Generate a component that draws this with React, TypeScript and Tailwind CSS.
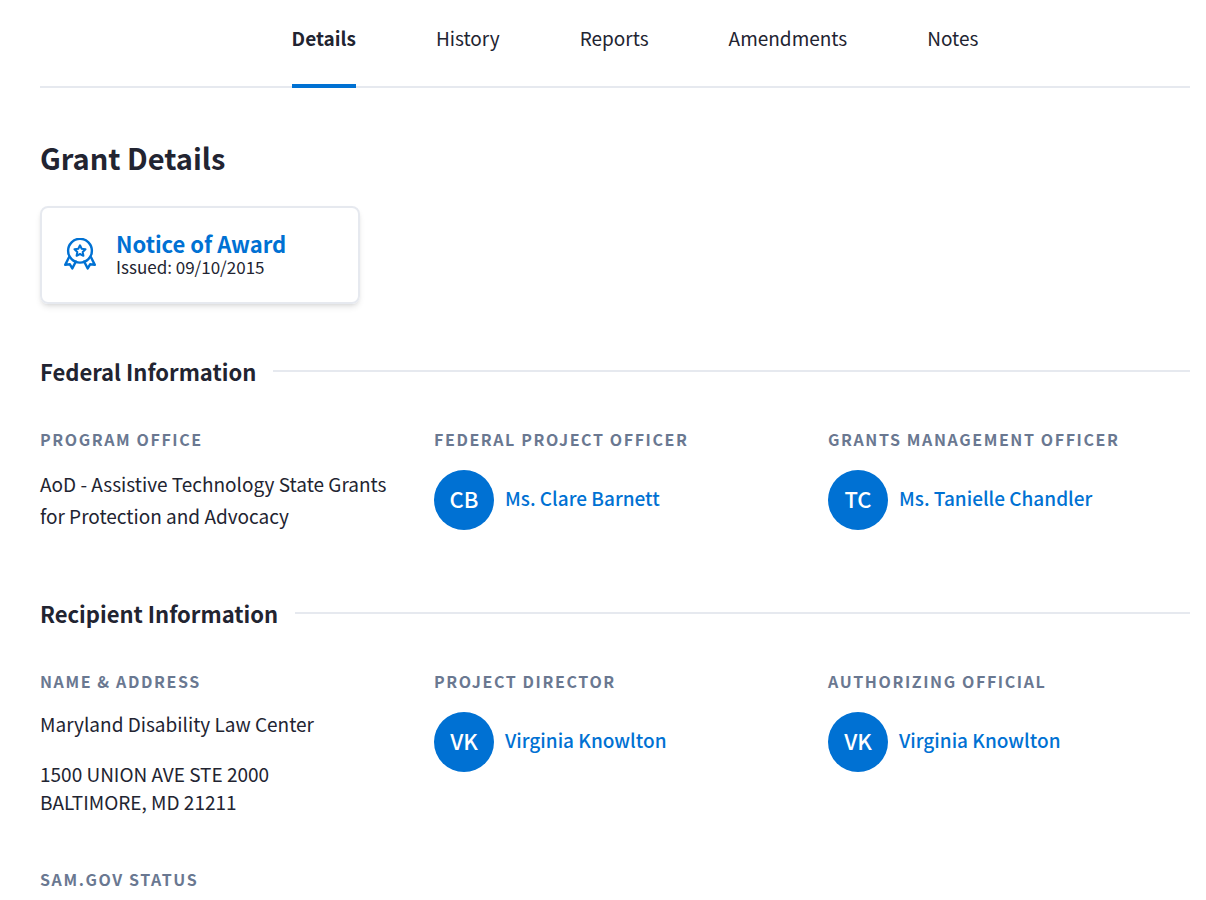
import React from "react";

const tabs = ["Details", "History", "Reports", "Amendments", "Notes"];

function AwardIcon() {
  return (
    <svg
      className="h-[34px] w-8 shrink-0"
      viewBox="0 2 32 34"
      fill="none"
      stroke="currentColor"
      strokeWidth="2.4"
      strokeLinejoin="round"
      strokeLinecap="round"
      aria-hidden="true"
    >
      <circle cx="16" cy="14.700" r="11.900" />
      <path
        d="M16 9.300l1.700 3.500 3.800.5-2.800 2.700.7 3.800-3.400-1.800-3.400 1.800.7-3.800-2.800-2.700 3.800-.5z"
        strokeWidth="2"
      />
      <path d="M5 21.200L1.200 28.900l4.700-.6L8.300 32.400l3.600-6.900" />
      <path d="M27 21.200l3.800 7.700-4.700-.6-2.400 4.100-3.600-6.900" />
    </svg>
  );
}

function SectionTitle({ children }: { children: React.ReactNode }) {
  return (
    <div className="flex items-center gap-[17px]">
      <h2 className="text-[22px] leading-8 font-bold">{children}</h2>
      <div className="h-[2px] flex-1 bg-[#e6e9ef]" />
    </div>
  );
}

function Label({ children }: { children: React.ReactNode }) {
  return (
    <h3 className="text-base leading-6 font-bold tracking-widest text-[#6a7891] uppercase">{children}</h3>
  );
}

function Person({ role, initials, name }: { role: string; initials: string; name: string }) {
  return (
    <div>
      <Label>{role}</Label>
      <a href="#person" className="mt-[19px] flex items-center gap-[11px] font-medium text-[#0071d3]">
        <span className="flex size-[60px] shrink-0 items-center justify-center rounded-full bg-[#0071d3] pb-1 text-[22px] text-white">
          {initials}
        </span>
        <span className="pb-1">{name}</span>
      </a>
    </div>
  );
}

export default function App() {
  return (
    <div className="min-h-screen bg-white pr-4 pb-12 pl-10 font-['Noto_Sans_CJK_SC',sans-serif] text-[19px] leading-8 text-[#222431]">
      <nav className="border-b-2 border-[#e6e9ef] pl-10">
        <ul className="-mb-[2px] flex justify-center gap-20">
          {tabs.map((tab, i) => (
            <li key={tab}>
              <a
                href={"#" + tab.toLowerCase()}
                aria-current={i === 0 ? "page" : undefined}
                className={
                  i === 0
                    ? "block border-b-4 border-[#0071d3] pt-[22px] pb-[30px] font-bold"
                    : "block border-b-4 border-transparent pt-[22px] pb-[30px]"
                }
              >
                {tab}
              </a>
            </li>
          ))}
        </ul>
      </nav>

      <main>
        <h1 className="mt-[45px] text-[29px] leading-12 font-bold">Grant Details</h1>
        <a
          href="#notice-of-award"
          className="mt-[25px] flex h-[98px] w-80 items-center gap-5 rounded-lg border-2 border-[#e6e9ef] px-[22px] shadow-md"
        >
          <span className="text-[#0071d3]">
            <AwardIcon />
          </span>
          <span className="flex flex-col">
            <span className="text-[22px] leading-6 font-bold text-[#0071d3]">Notice of Award</span>
            <span className="text-[17px] leading-6">Issued: 09/10/2015</span>
          </span>
        </a>

        <section className="mt-[51px]">
          <SectionTitle>Federal Information</SectionTitle>
          <div className="mt-10 grid grid-cols-3 gap-8">
            <div>
              <Label>Program Office</Label>
              <p className="mt-[17px]">AoD - Assistive Technology State Grants for Protection and Advocacy</p>
            </div>
            <Person role="Federal Project Officer" initials="CB" name="Ms. Clare Barnett" />
            <Person role="Grants Management Officer" initials="TC" name="Ms. Tanielle Chandler" />
          </div>
        </section>

        <section className="mt-[65px]">
          <SectionTitle>Recipient Information</SectionTitle>
          <div className="mt-10 grid grid-cols-3 gap-8">
            <div>
              <Label>Name &amp; Address</Label>
              <p className="mt-[17px] leading-7">Maryland Disability Law Center</p>
              <address className="mt-[22px] leading-7 not-italic">
                1500 UNION AVE STE 2000
                <br />
                BALTIMORE, MD 21211
              </address>
            </div>
            <Person role="Project Director" initials="VK" name="Virginia Knowlton" />
            <Person role="Authorizing Official" initials="VK" name="Virginia Knowlton" />
          </div>
          <div className="mt-[51px]">
            <Label>SAM.gov Status</Label>
          </div>
        </section>
      </main>
    </div>
  );
}
